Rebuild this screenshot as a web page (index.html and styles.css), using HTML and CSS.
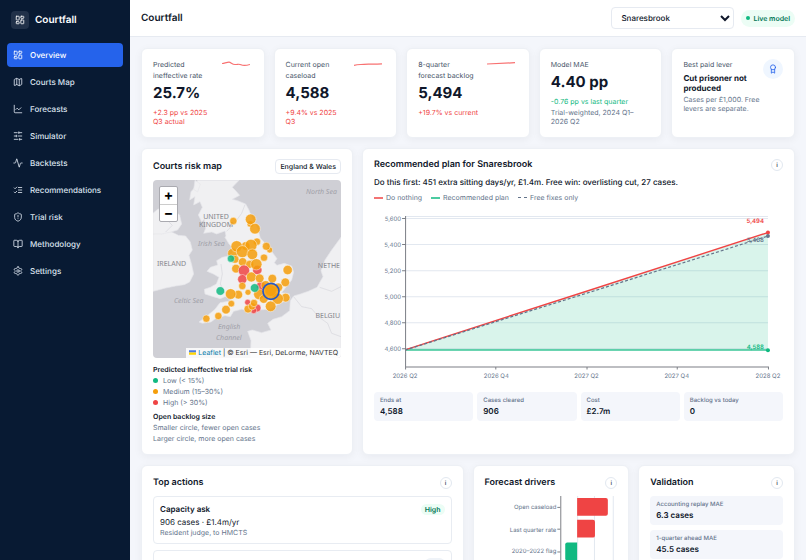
FILE: index.html
```html
<!DOCTYPE html>
<html lang="en">
<head>
<meta charset="utf-8">
<title>Courtfall</title>
<link rel="stylesheet" href="styles.css">
</head>
<body>
<div class="shell">
  <aside class="sidebar">
    <div class="brand">
      <span class="brand-mark"><svg class="icon" viewBox="0 0 24 24"><rect x="3" y="3" width="7" height="9" rx="1"/><rect x="14" y="3" width="7" height="5" rx="1"/><rect x="14" y="12" width="7" height="9" rx="1"/><rect x="3" y="16" width="7" height="5" rx="1"/></svg></span>
      <span>Courtfall</span>
    </div>
    <nav class="nav">
      <a class="nav-item active" href="#"><svg class="icon" viewBox="0 0 24 24"><rect x="3" y="3" width="7" height="9" rx="1"/><rect x="14" y="3" width="7" height="5" rx="1"/><rect x="14" y="12" width="7" height="9" rx="1"/><rect x="3" y="16" width="7" height="5" rx="1"/></svg>Overview</a>
      <a class="nav-item" href="#"><svg class="icon" viewBox="0 0 24 24"><path d="M14.1 5.55a2 2 0 0 0 1.8 0l3.65-1.83A1 1 0 0 1 21 4.62v12.76a1 1 0 0 1-.55.9l-4.55 2.27a2 2 0 0 1-1.8 0l-4.2-2.1a2 2 0 0 0-1.8 0l-3.65 1.83A1 1 0 0 1 3 19.38V6.62a1 1 0 0 1 .55-.9L8.1 3.45a2 2 0 0 1 1.8 0z"/><path d="M15 5.76v15M9 3.24v15"/></svg>Courts Map</a>
      <a class="nav-item" href="#"><svg class="icon" viewBox="0 0 24 24"><path d="M3 3v16a2 2 0 0 0 2 2h16"/><path d="m19 9-5 5-4-4-3 3"/></svg>Forecasts</a>
      <a class="nav-item" href="#"><svg class="icon" viewBox="0 0 24 24"><path d="M21 4h-7M10 4H3M21 12h-9M8 12H3M21 20h-5M12 20H3M14 2v4M8 10v4M16 18v4"/></svg>Simulator</a>
      <a class="nav-item" href="#"><svg class="icon" viewBox="0 0 24 24"><path d="M22 12h-2.48a2 2 0 0 0-1.93 1.46l-2.35 8.36a.25.25 0 0 1-.48 0L9.24 2.18a.25.25 0 0 0-.48 0l-2.35 8.36A2 2 0 0 1 4.49 12H2"/></svg>Backtests</a>
      <a class="nav-item" href="#"><svg class="icon" viewBox="0 0 24 24"><path d="m3 17 2 2 4-4M3 7l2 2 4-4M13 6h8M13 12h8M13 18h8"/></svg>Recommendations</a>
      <a class="nav-item" href="#"><svg class="icon" viewBox="0 0 24 24"><path d="M20 13c0 5-3.5 7.5-7.66 8.95a1 1 0 0 1-.67-.01C7.5 20.5 4 18 4 13V6a1 1 0 0 1 1-1c2 0 4.5-1.2 6.24-2.72a1.17 1.17 0 0 1 1.52 0C14.51 3.81 17 5 19 5a1 1 0 0 1 1 1z"/><path d="M12 8v4M12 16h.01"/></svg>Trial risk</a>
      <a class="nav-item" href="#"><svg class="icon" viewBox="0 0 24 24"><path d="M12 7v14"/><path d="M3 18a1 1 0 0 1-1-1V4a1 1 0 0 1 1-1h5a4 4 0 0 1 4 4 4 4 0 0 1 4-4h5a1 1 0 0 1 1 1v13a1 1 0 0 1-1 1h-6a3 3 0 0 0-3 3 3 3 0 0 0-3-3z"/></svg>Methodology</a>
      <a class="nav-item" href="#"><svg class="icon" viewBox="0 0 24 24"><path d="M12.22 2h-.44a2 2 0 0 0-2 2v.18a2 2 0 0 1-1 1.73l-.43.25a2 2 0 0 1-2 0l-.15-.08a2 2 0 0 0-2.73.73l-.22.38a2 2 0 0 0 .73 2.73l.15.1a2 2 0 0 1 1 1.72v.51a2 2 0 0 1-1 1.74l-.15.09a2 2 0 0 0-.73 2.73l.22.38a2 2 0 0 0 2.73.73l.15-.08a2 2 0 0 1 2 0l.43.25a2 2 0 0 1 1 1.73V20a2 2 0 0 0 2 2h.44a2 2 0 0 0 2-2v-.18a2 2 0 0 1 1-1.73l.43-.25a2 2 0 0 1 2 0l.15.08a2 2 0 0 0 2.73-.73l.22-.39a2 2 0 0 0-.73-2.73l-.15-.08a2 2 0 0 1-1-1.74v-.5a2 2 0 0 1 1-1.74l.15-.09a2 2 0 0 0 .73-2.73l-.22-.38a2 2 0 0 0-2.73-.73l-.15.08a2 2 0 0 1-2 0l-.43-.25a2 2 0 0 1-1-1.73V4a2 2 0 0 0-2-2z"/><circle cx="12" cy="12" r="3"/></svg>Settings</a>
    </nav>
  </aside>

  <div class="page">
    <header class="topbar">
      <h1>Courtfall</h1>
      <div class="topbar-tools">
        <select class="court-select" aria-label="Court"><option>Snaresbrook</option></select>
        <span class="live">Live model</span>
      </div>
    </header>

    <main class="content">
      <section class="kpis">
        <article class="card kpi">
          <div class="kpi-body">
            <p class="kpi-label">Predicted ineffective rate</p>
            <p class="kpi-value">25.7%</p>
            <p class="kpi-note bad">+2.3 pp vs 2025 Q3 actual</p>
          </div>
          <svg class="spark" viewBox="0 0 28 8"><path d="M0 2.500C3 2 5 1.200 7 1.200S10 3.500 13 3.500 17 2.700 19 3.700 25 4.300 28 3.500"/></svg>
        </article>
        <article class="card kpi">
          <div class="kpi-body">
            <p class="kpi-label">Current open caseload</p>
            <p class="kpi-value">4,588</p>
            <p class="kpi-note bad">+9.4% vs 2025 Q3</p>
          </div>
          <svg class="spark" viewBox="0 0 28 8"><path d="M0 4.500C4 3.300 6 3.700 10 3.300S18 3.500 28 2.900"/></svg>
        </article>
        <article class="card kpi">
          <div class="kpi-body">
            <p class="kpi-label">8-quarter<br>forecast backlog</p>
            <p class="kpi-value">5,494</p>
            <p class="kpi-note bad">+19.7% vs current</p>
          </div>
          <svg class="spark" viewBox="0 0 28 8"><path d="M0 3L28 1.700"/></svg>
        </article>
        <article class="card kpi">
          <div class="kpi-body">
            <p class="kpi-label">Model MAE</p>
            <p class="kpi-value">4.40 pp</p>
            <p class="kpi-note good">-0.76 pp vs last quarter</p>
            <p class="kpi-sub gap">Trial-weighted, 2024 Q1–<wbr><span class="nowrap">2026 Q2</span></p>
          </div>
        </article>
        <article class="card kpi">
          <div class="kpi-body">
            <p class="kpi-label">Best paid lever</p>
            <p class="kpi-lever">Cut prisoner not produced</p>
            <p class="kpi-sub">Cases per £1,000. Free levers are separate.</p>
          </div>
          <span class="award"><svg class="icon" viewBox="0 0 24 24"><circle cx="12" cy="8" r="6"/><path d="M8 13v9l4-3 4 3v-9"/></svg></span>
        </article>
      </section>

      <section class="grid">
        <article class="card span-4">
          <div class="card-head">
            <h2>Courts risk map</h2>
            <button class="region" type="button">England &amp; Wales</button>
          </div>
          <div class="map">
            <svg class="map-art" viewBox="0 0 188 178" preserveAspectRatio="xMidYMid slice">
              <rect width="188" height="178" fill="#cfcfd5"/>
              <g transform="translate(-8 -30) scale(.3333)">
                <g fill="#f0f0f2" stroke="#e6e6ea" stroke-width="2" stroke-linejoin="round">
                  <path d="M158 91L150 112 138 125 134 150 150 140 146 165 165 155 172 172 160 195 170 215 178 208 182 235 176 250 200 246 215 252 240 243 243 258 240 262 252 282 262 290 262 308 250 318 232 322 215 332 218 345 196 352 186 364 205 372 222 382 214 402 196 412 178 418 180 432 205 440 226 446 240 440 262 445 250 454 225 458 210 478 186 498 162 516 172 520 198 516 214 504 240 497 256 500 266 484 290 478 318 484 340 480 372 478 402 462 430 448 434 432 410 428 424 410 440 390 446 366 440 348 418 340 396 346 388 338 396 326 380 304 362 282 346 264 338 236 322 206 312 180 302 162 278 152 262 148 284 136 272 122 262 112 282 91z"/>
                  <path d="M24 252L55 246 80 246 100 256 122 258 136 276 142 300 132 316 140 344 146 372 134 396 118 404 92 408 62 414 40 420 24 424z"/>
                  <path d="M24 190L38 178 60 172 86 178 104 196 110 222 98 240 78 246 50 252 24 252z"/>
                  <path d="M588 262L560 300 540 330 528 362 534 380 516 412 490 424 466 432 446 438 436 452 434 482 410 500 384 508 368 520 378 540 350 548 322 540 308 544 318 572 316 626H588z"/>
                  <path d="M150 91L166 102 158 126 146 118z"/>
                </g>
                <g fill="none" stroke="#d6d6dc" stroke-width="2">
                  <path d="M228 342L232 372 226 402 240 430M245 244L268 220 290 190 300 164"/>
                  <path d="M446 440L470 470 500 476 520 500 548 520 560 550 588 560M524 412L560 424 588 410M62 246L82 226 60 204"/>
                </g>
              </g>
              <g class="map-label">
                <text x="63" y="39" text-anchor="middle">UNITED</text>
                <text x="63" y="47" text-anchor="middle">KINGDOM</text>
                <text x="4" y="86">IRELAND</text>
                <text x="187" y="88" text-anchor="end">NETHE</text>
                <text x="187" y="138" text-anchor="end">BELGIU</text>
              </g>
              <g class="map-label sea">
                <text x="153" y="14">North Sea</text>
                <text x="45" y="66">Irish Sea</text>
                <text x="21" y="123">Celtic Sea</text>
                <text x="65" y="149">English</text>
                <text x="63" y="160">Channel</text>
              </g>
              <g class="courts" transform="translate(-8 -30) scale(.3333)">
                <g class="mid">
                  <circle cx="265" cy="213" r="11"/><circle cx="316" cy="222" r="10"/><circle cx="317" cy="208" r="16"/><circle cx="330" cy="236" r="16"/>
                  <circle cx="302" cy="288" r="13"/><circle cx="336" cy="275" r="11"/><circle cx="318" cy="286" r="18"/><circle cx="263" cy="310" r="15"/><circle cx="270" cy="328" r="12"/><circle cx="275" cy="289" r="17"/><circle cx="292" cy="305" r="18"/><circle cx="322" cy="313" r="16"/>
                  <circle cx="374" cy="300" r="9"/><circle cx="364" cy="289" r="12"/><circle cx="357" cy="323" r="11"/><circle cx="293" cy="336" r="13"/><circle cx="314" cy="343" r="12"/><circle cx="273" cy="356" r="13"/><circle cx="428" cy="360" r="14"/>
                </g>
                <g class="high"><circle cx="337" cy="360" r="14"/><circle cx="297" cy="362" r="17"/><circle cx="292" cy="388" r="14"/><circle cx="348" cy="408" r="14"/></g>
                <g class="mid">
                  <circle cx="334" cy="343" r="17"/><circle cx="319" cy="381" r="15"/><circle cx="344" cy="385" r="13"/><circle cx="382" cy="386" r="13"/><circle cx="421" cy="397" r="13"/><circle cx="362" cy="406" r="14"/><circle cx="292" cy="408" r="11"/><circle cx="309" cy="427" r="9"/><circle cx="280" cy="434" r="13"/><circle cx="257" cy="432" r="16"/><circle cx="342" cy="433" r="16"/><circle cx="356" cy="447" r="13"/><circle cx="400" cy="412" r="13"/><circle cx="422" cy="443" r="13"/><circle cx="398" cy="446" r="17"/><circle cx="377" cy="469" r="16"/>
                </g>
                <g class="low"><circle cx="258" cy="326" r="11"/><circle cx="226" cy="423" r="13"/><circle cx="329" cy="414" r="13"/></g>
                <g class="high"><circle cx="308" cy="457" r="9"/><circle cx="336" cy="474" r="12"/><circle cx="326" cy="482" r="9"/></g>
                <g class="mid">
                  <circle cx="259" cy="461" r="10"/><circle cx="243" cy="479" r="13"/><circle cx="220" cy="498" r="11"/><circle cx="184" cy="506" r="11"/><circle cx="309" cy="477" r="12"/><circle cx="321" cy="469" r="11"/><circle cx="327" cy="459" r="11"/><circle cx="377" cy="422" r="17"/>
                  <circle class="selected" cx="378" cy="424" r="24"/>
                </g>
              </g>
            </svg>
            <div class="map-zoom">
              <button type="button" aria-label="Zoom in">+</button>
              <button type="button" aria-label="Zoom out">−</button>
            </div>
            <div class="map-credit"><svg class="flag" viewBox="0 0 12 8"><path fill="#4C7BE1" d="M0 0h12v4H0z"/><path fill="#FFD500" d="M0 4h12v4H0z"/></svg> <a href="#">Leaflet</a> | © Esri — Esri, DeLorme, NAVTEQ</div>
          </div>
          <div class="map-legend">
            <p class="legend-title">Predicted ineffective trial risk</p>
            <p><i class="dot low-dot"></i>Low (&lt; 15%)</p>
            <p><i class="dot mid-dot"></i>Medium (15–30%)</p>
            <p><i class="dot high-dot"></i>High (&gt; 30%)</p>
            <p class="legend-title second">Open backlog size</p>
            <p>Smaller circle, fewer open cases</p>
            <p>Larger circle, more open cases</p>
          </div>
        </article>

        <article class="card span-8">
          <div class="card-head compact">
            <h2>Recommended plan for Snaresbrook</h2>
            <button class="info" type="button" aria-label="About the plan">i</button>
          </div>
          <p class="plan-lead">Do this first: 451 extra sitting days/yr, £1.4m. Free win: overlisting cut, 27 cases.</p>
          <div class="series">
            <span><i class="key red"></i>Do nothing</span>
            <span><i class="key green"></i>Recommended plan</span>
            <span><i class="key dash"></i>Free fixes only</span>
          </div>
          <svg class="plan-chart" viewBox="0 0 408 180">
            <g stroke="#e2e8f0"><path d="M31 11.500H393M31 13.500H393M31 39.500H393M31 65.500H393M31 91.500H393M31 117.500H393M31 143.500H393"/></g>
            <path d="M31 145L393 28V145z" fill="#10b981" fill-opacity=".16"/>
            <path d="M31 144.700H393" stroke="#10b981" stroke-opacity=".8" stroke-width="1.500"/>
            <path d="M31 144.500L212 86 393 27.500" stroke="#ef4444" stroke-width="1.400" fill="none"/>
            <path d="M31 144.700L212 88 393 31" stroke="#64748b" stroke-width="1.200" stroke-dasharray="3 2" fill="none"/>
            <path d="M31.500 11V161.500H393.500M28 13.500h3M28 39.500h3M28 65.500h3M28 91.500h3M28 117.500h3M28 143.500h3M31.500 161v3M121.500 161v3M212.500 161v3M302.500 161v3M393.500 161v3" stroke="#7c7f86" fill="none"/>
            <g class="tick" text-anchor="end"><text x="27" y="16">5,600</text><text x="27" y="42">5,400</text><text x="27" y="68">5,200</text><text x="27" y="94">5,000</text><text x="27" y="120">4,800</text><text x="27" y="146">4,600</text></g>
            <g class="tick" text-anchor="middle"><text x="31" y="173">2026 Q2</text><text x="122" y="173">2026 Q4</text><text x="212" y="173">2027 Q2</text><text x="302" y="173">2027 Q4</text><text x="393" y="173">2028 Q2</text></g>
            <circle cx="393" cy="27.500" r="2" fill="#ef4444"/><circle cx="393" cy="31" r="2" fill="#64748b"/><circle cx="393" cy="145" r="2" fill="#10b981"/>
            <g class="tick end" text-anchor="end"><text x="389" y="18" fill="#ef4444">5,494</text><text x="389" y="37" fill="#64748b">5,468</text><text x="389" y="144" fill="#10b981">4,588</text></g>
          </svg>
          <div class="tiles">
            <div class="tile"><span>Ends at</span><b>4,588</b></div>
            <div class="tile"><span>Cases cleared</span><b>906</b></div>
            <div class="tile"><span>Cost</span><b>£2.7m</b></div>
            <div class="tile"><span>Backlog vs today</span><b>0</b></div>
          </div>
        </article>

        <article class="card span-6">
          <div class="card-head"><h2>Top actions</h2><button class="info" type="button" aria-label="About top actions">i</button></div>
          <div class="action">
            <div class="action-head"><h3>Capacity ask</h3><span class="badge">High</span></div>
            <p class="action-main">906 cases · £1.4m/yr</p>
            <p class="action-sub">Resident judge, to HMCTS</p>
          </div>
          <div class="action next"><div class="action-head"><span></span><span class="badge muted"></span></div></div>
        </article>

        <article class="card span-3">
          <div class="card-head"><h2>Forecast drivers</h2><button class="info" type="button" aria-label="About forecast drivers">i</button></div>
          <svg class="driver-chart" viewBox="0 0 134 90">
            <path d="M93.500 0V90M110.500 0V90M129.500 0V90" stroke="#e2e8f0"/>
            <path d="M93 2h29a2 2 0 0 1 2 2v14a2 2 0 0 1-2 2H93zM93 24h16a2 2 0 0 1 2 2v14a2 2 0 0 1-2 2H93z" fill="#ef4444"/>
            <path d="M93 47H83a2 2 0 0 0-2 2v14a2 2 0 0 0 2 2h10z" fill="#10b981"/>
            <path d="M76.500 0V90M73 11.500h3M73 33.500h3M73 56.500h3" stroke="#7c7f86"/>
            <g class="tick" text-anchor="end"><text x="72" y="13">Open caseload</text><text x="72" y="36">Last quarter rate</text><text x="72" y="58">2020–2022 flag</text></g>
          </svg>
        </article>

        <article class="card span-3">
          <div class="card-head"><h2>Validation</h2><button class="info" type="button" aria-label="About validation">i</button></div>
          <div class="stack">
            <div class="tile"><span>Accounting replay MAE</span><b>6.3 cases</b></div>
            <div class="tile"><span>1-quarter ahead MAE</span><b>45.5 cases</b></div>
          </div>
        </article>
      </section>
    </main>
  </div>
</div>
</body>
</html>
```
FILE: styles.css
```css
* { box-sizing: border-box; }
body { margin: 0; font-family: Inter, sans-serif; font-size: 7px; line-height: 11px; color: #0f172a; background: #f4f6fb; text-rendering: geometricPrecision; }
h1, h2, h3, p { margin: 0; }
button, select { font: inherit; color: inherit; text-rendering: inherit; }
a { text-decoration: none; }
.nowrap { white-space: nowrap; }

.icon { width: 10px; height: 10px; fill: none; stroke: currentColor; stroke-width: 2; stroke-linecap: round; stroke-linejoin: round; flex: none; }
.shell { display: grid; grid-template-columns: 130px 1fr; height: 100vh; overflow: hidden; }

.sidebar { background: #081a33; padding: 11px 7px; color: #fff; }
.brand { display: flex; align-items: center; gap: 6px; padding: 0 4px; margin-bottom: 14px; font-size: 10px; font-weight: 600; }
.brand-mark { display: grid; place-items: center; width: 18px; height: 18px; border-radius: 4px; background: #213149; }
.nav { display: grid; gap: 3px; }
.nav-item { display: flex; align-items: center; gap: 7px; height: 24px; padding: 0 6px; border-radius: 4px; color: #dbe3ee; font-size: 8px; font-weight: 500; }
.nav-item.active { background: #2563eb; color: #fff; }

.page { min-width: 0; }
.topbar { display: flex; align-items: center; justify-content: space-between; height: 37px; padding: 0 11px; background: #fff; border-bottom: 1px solid #e6eaf1; }
.topbar h1 { font-size: 10px; font-weight: 600; }
.topbar-tools { display: flex; align-items: center; gap: 7px; }
.court-select { width: 123px; height: 22px; padding: 0 0 0 5px; border: 1px solid #e6eaf1; border-radius: 4px; background-color: #fff; font-size: 8px; font-weight: 500; }
.live { display: flex; align-items: center; gap: 3px; padding: 3px 5px; border-radius: 9px; background: #ecfdf5; color: #047857; font-weight: 600; }
.live::before { content: ""; width: 4px; height: 4px; border-radius: 50%; background: #10b981; }

.content { padding: 11px; }
.card { background: #fff; border: 1px solid #edf0f5; border-radius: 6px; padding: 10px 11px; box-shadow: 0 2px 8px rgba(15, 23, 42, .05); min-width: 0; }
.card h2 { font-size: 9px; line-height: 12px; font-weight: 600; }

.kpis { display: grid; grid-template-columns: repeat(5, 1fr); gap: 9px; margin-bottom: 10px; }
.kpi { display: flex; justify-content: space-between; min-height: 90px; }
.kpi-body { flex: 1; min-width: 0; }
.kpi-label { color: #475569; }
.kpi-value { margin: 3px 0 6px; font-size: 15px; line-height: 18px; font-weight: 700; }
.kpi-note, .kpi-sub { line-height: 9px; }
.kpi-sub { color: #64748b; }
.kpi-sub.gap { margin-top: 2px; }
.kpi-lever { margin: 3px 0 2px; font-size: 8px; line-height: 10px; font-weight: 700; }
.bad { color: #ef4444; }
.good { color: #10b981; }
.spark { width: 28px; height: 8px; margin: 2px 3px 0 6px; fill: none; stroke: #f87171; stroke-width: 1.2; flex: none; }
.award { display: grid; place-items: center; width: 20px; height: 20px; border-radius: 50%; background: #eff6ff; color: #2563eb; flex: none; }

.grid { display: grid; grid-template-columns: repeat(12, 1fr); gap: 10px 9px; }
.span-3 { grid-column: span 3; }
.span-4 { grid-column: span 4; }
.span-6 { grid-column: span 6; }
.span-8 { grid-column: span 8; }
.card-head { display: flex; align-items: center; justify-content: space-between; min-height: 14px; margin-bottom: 6px; }
.card-head.compact { min-height: 12px; margin-bottom: 5px; }
.info { width: 12px; height: 12px; padding: 0; border: 1px solid #e2e8f0; border-radius: 50%; background: #fff; color: #475569; font-size: 6px; line-height: 9px; font-weight: 600; }
.region { height: 15px; padding: 0 4px; border: 1px solid #e6eaf1; border-radius: 4px; background: #fff; font-weight: 500; line-height: 12px; }

.map { position: relative; border-radius: 4px; overflow: hidden; }
.map-art { display: block; width: 100%; }
.map-label { font-family: "Noto Sans", sans-serif; font-size: 7px; fill: #85858c; }
.map-label.sea { font-style: italic; fill: #a0a0a8; }
.courts circle { stroke: #fff; stroke-opacity: .7; stroke-width: 2; fill-opacity: .85; }
.courts circle.selected { stroke: #2457c5; stroke-opacity: 1; stroke-width: 5; }
.mid { fill: #f59e0b; }
.high { fill: #ef4444; }
.low { fill: #10b981; }
.map-zoom { position: absolute; left: 6px; top: 6px; width: 19px; border: 1px solid #aaaab0; border-radius: 2px; background: #fff; }
.map-zoom button { display: block; width: 17px; height: 17px; padding: 0; border: 0; background: none; color: #000; font-size: 14px; line-height: 17px; font-weight: 700; }
.map-zoom button + button { border-top: 1px solid #ccc; }
.map-credit { position: absolute; right: 0; bottom: 0; padding: 0 3px; background: rgba(255, 255, 255, .85); color: #333; line-height: 10px; white-space: nowrap; }
.map-credit a { color: #0078a8; }
.flag { width: 7px; height: 5px; }
.map-legend { margin-top: 6px; color: #64748b; }
.map-legend p { display: flex; align-items: center; gap: 5px; }
.map-legend .legend-title { color: #0f172a; font-weight: 600; }
.map-legend .second { margin-top: 3px; }
.dot { width: 5px; height: 5px; border-radius: 50%; }
.low-dot { background: #10b981; }
.mid-dot { background: #f59e0b; }
.high-dot { background: #ef4444; }

.plan-lead { font-size: 8px; line-height: 12px; font-weight: 500; }
.series { display: flex; gap: 9px; margin-top: 4px; color: #64748b; }
.series span { display: flex; align-items: center; gap: 3px; }
.key { width: 9px; height: 2px; opacity: .75; }
.key.red { background: #ef4444; }
.key.green { background: #10b981; }
.key.dash { height: 0; border-top: 1px dashed #64748b; opacity: 1; }
.plan-chart { display: block; width: 100%; margin: 2px 0 7px; overflow: visible; }
.tick { font-size: 6px; fill: #64748b; }
.end { font-weight: 600; }
.tiles { display: grid; grid-template-columns: repeat(4, 1fr); gap: 4px; }
.tile { display: grid; padding: 4px 6px; border-radius: 4px; background: #f4f6fb; }
.tile span { color: #64748b; font-size: 6px; line-height: 10px; font-weight: 500; }
.tile b { font-size: 8px; line-height: 11px; font-weight: 600; }

.action { padding: 6px; border: 1px solid #e8ecf2; border-radius: 4px; }
.action.next { margin-top: 6px; }
.action-head { display: flex; align-items: center; justify-content: space-between; min-height: 12px; }
.action h3 { font-size: 8px; font-weight: 600; }
.badge { padding: 0 4px; border-radius: 6px; background: #ecfdf5; color: #047857; font-weight: 600; }
.badge.muted { width: 20px; height: 11px; background: #eff3f8; }
.action-main { font-size: 8px; line-height: 12px; margin-top: 1px; }
.action-sub { color: #64748b; line-height: 9px; }
.driver-chart { display: block; width: 100%; overflow: visible; }
.stack { display: grid; gap: 5px; }
```
